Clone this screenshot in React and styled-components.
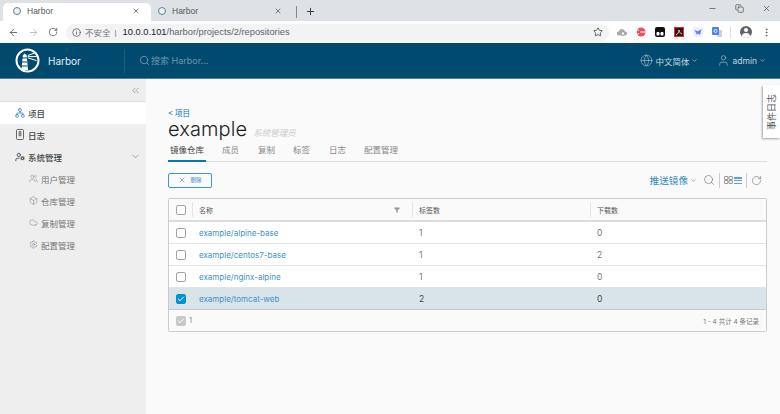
import React from "react";
import styled, { createGlobalStyle } from "styled-components";
import {
  ArrowLeft, ArrowRight, RotateCw, Info, Star, Minus, X, Plus, Search, Globe, User, ChevronDown,
  ChevronsLeft, Network, UserCog, Users, Box, Cloud, Settings, MoreVertical, Filter, Check, Copy,
} from "lucide-react";

const Global = createGlobalStyle`
  html, body { margin: 0; padding: 0; background: #fafafa; }
  body { font-family: Inter, "Noto Sans CJK SC", sans-serif; }
  * { box-sizing: border-box; }
`;

const Page = styled.div`
  width: 780px; height: 414px; overflow: hidden; position: relative;
  display: flex; flex-direction: column;
`;
const TabStrip = styled.div`
  height: 21px; background: #dee1e6; display: flex; align-items: flex-end; padding-left: 3px; color: #5f6368;
`;
const Tab = styled.div`
  width: ${p => p.$w}px; height: 18px; display: flex; align-items: center; padding: 0 0 2px ${p => p.$pad}px;
  background: ${p => (p.$active ? "#fff" : "transparent")}; border-radius: 5px 5px 0 0;
  font: 8.5px "Liberation Sans", sans-serif; color: #55585c;
`;
const Favicon = styled.span`
  width: 8px; height: 8px; border-radius: 50%; border: 1.5px solid #5a8a80; background: #eef; margin-right: 6px; flex: none;
`;
const TabLabel = styled.span`flex: 1;`;
const TabClose = styled.span`display: flex; width: 19px; color: #444;`;
const TabSep = styled.span`width: 1px; height: 12px; background: #80868b; margin: 0 8px 3px 3px;`;
const PlusBox = styled.span`display: flex; margin-bottom: 4px; color: #333;`;
const WinControls = styled.div`
  margin-left: auto; align-self: flex-start; display: flex; gap: 18px; padding: 4px 9px 0 0; color: #555;
`;
const BrowserBar = styled.div`
  height: 22px; background: #fff; display: flex; align-items: center; padding: 0 6px 0 8px; color: #5f6368;
`;
const NavIcons = styled.div`display: flex; gap: 9px; margin-right: 8px;`;
const Omnibox = styled.div`
  width: 543px; height: 17px; border-radius: 9px; background: #f1f3f4; display: flex; align-items: center; padding: 0 6px;
  font: 9.3px "Liberation Sans", "Noto Sans CJK SC", sans-serif; color: #202124;
`;
const NotSafe = styled.span`color: #777; margin-left: 4px; font-size: 8.5px;`;
const Divider = styled.span`color: #777; margin: 0 6px 0 4px; font-size: 8px;`;
const UrlPath = styled.span`color: #5f6368;`;
const StarBox = styled.span`margin-left: auto; display: flex; color: #444;`;
const Extensions = styled.div`display: flex; align-items: center; margin-left: 8px; gap: 9px;`;
const ExtSep = styled.span`width: 1px; height: 11px; background: #ddd; margin: 0 0 0 -1px;`;
const Avatar = styled.span`
  width: 12px; height: 12px; border-radius: 50%; background: #5f6368; position: relative; overflow: hidden; flex: none;
  &::before { content: ""; position: absolute; left: 4px; top: 2px; width: 4px; height: 4px; border-radius: 50%; background: #fff; }
  &::after { content: ""; position: absolute; left: 2px; top: 7px; width: 8px; height: 6px; border-radius: 50%; background: #fff; }
`;

const Header = styled.header`
  height: 36px; background: #004a70; border-bottom: 1px solid #4d7f9a; display: flex; align-items: center; color: #fff; flex: none;
`;
const Brand = styled.div`
  width: 125px; height: 24px; display: flex; align-items: center; padding-left: 15px; gap: 8px;
  border-right: 1px solid #1a5f82; font-size: 10px; color: #e6eef2;
`;
const SearchBox = styled.div`
  display: flex; align-items: center; margin-left: 14px; gap: 1px; font-size: 9px; color: #6d97ad;
`;
const HeaderRight = styled.div`display: flex; align-items: center; margin-left: auto; padding-right: 14px; color: #c3d6df; font-size: 8.5px;`;
const HeaderItem = styled.div`
  display: flex; align-items: center; gap: 2px; margin-left: ${p => p.$ml || 0}px;
`;

const Body = styled.div`flex: 1; display: flex; min-height: 0;`;
const Sidebar = styled.nav`width: 146px; background: #eee; flex: none; display: flex; flex-direction: column;`;
const Collapse = styled.div`
  height: 23px; border-bottom: 1px solid #dcdcdc; display: flex; justify-content: flex-end; align-items: center; padding-right: 5px; color: #555; flex: none;
`;
const NavRow = styled.div`
  height: 22px; display: flex; align-items: center; flex: none;
  padding: 0 0 1px ${p => (p.$sub ? 29 : 15)}px; gap: 3px;
  background: ${p => (p.$active ? "#fff" : "transparent")};
  color: ${p => (p.$sub ? "#777" : "#444")}; font-size: 8.5px; font-weight: ${p => (p.$sub ? 400 : 500)};
`;
const NavChevron = styled.span`margin-left: auto; display: flex; margin-right: 5px; color: #666;`;

const Main = styled.main`flex: 1; padding: 30px 13px 0 22px; min-width: 0;`;
const Crumb = styled.div`font-size: 7.5px; color: #0079b8; line-height: 10px; height: 10px;`;
const TitleRow = styled.div`display: flex; align-items: baseline; gap: 6px; height: 20px;`;
const Title = styled.h1`margin: 0; font-size: 20px; font-weight: 300; color: #222; line-height: 20px; letter-spacing: 0.1px;`;
const Role = styled.span`font-size: 8.5px; font-style: italic; color: #ccc;`;
const Tabs = styled.div`display: flex; height: 23px; border-bottom: 1px solid #ddd;`;
const ProjectTab = styled.div`
  font-size: 8.5px; color: ${p => (p.$active ? "#444" : "#888")}; padding: 0 2px; height: 23px; line-height: 23px;
  margin-right: ${p => p.$mr}px; white-space: nowrap;
  border-bottom: 2px solid ${p => (p.$active ? "#0079b8" : "transparent")};
  width: ${p => p.$w}px;
`;
const Actions = styled.div`display: flex; align-items: center; height: 16px; margin-top: 10px;`;
const DeleteBtn = styled.button`
  width: 44px; height: 15px; padding: 0; border: 1px solid #3a9ad0; border-radius: 2px; background: transparent; color: #3a8fc0;
  font: 5.5px Inter, "Noto Sans CJK SC", sans-serif; display: flex; align-items: center; justify-content: center; gap: 4px;
`;
const Tools = styled.div`margin-left: auto; display: flex; align-items: center; color: #666; padding-right: 5px;`;
const Push = styled.span`font-size: 9.5px; color: #2f8ac0; display: flex; align-items: center; gap: 2px; margin-right: 6px; letter-spacing: 0.1px;`;
const ToolSep = styled.span`width: 1px; height: 15px; background: #ccc; margin: 0 4px;`;
const ViewToggle = styled.span`display: flex; align-items: center; gap: 1px;`;
const ListGlyph = styled.span`
  width: 8px; height: 7px; display: block;
  background: repeating-linear-gradient(#5ba3cf 0 1.5px, transparent 1.5px 2.75px);
`;

const TableCard = styled.div`
  margin-top: 10px; border: 1px solid #ccc; border-radius: 2px; background: #fff; overflow: hidden;
`;
const RowGrid = styled.div`
  display: grid; grid-template-columns: 23px 220px 178px 1fr; align-items: center;
  height: ${p => (p.$head ? 23 : 22)}px;
  background: ${p => (p.$head ? "#fafafa" : p.$selected ? "#d9e4ea" : "#fff")};
  border-bottom: ${p => (p.$head ? "2px solid #ddd" : p.$selected ? "1px solid #c8c8c8" : "1px solid #e4e4e4")};
  font-size: 8.5px; color: #666;
`;
const BoxCell = styled.div`display: flex; padding-left: 7px;`;
const CheckBox = styled.span`
  width: 10px; height: 10px; border-radius: 2px; display: flex; align-items: center; justify-content: center; color: #fff;
  border: 1px solid ${p => (p.$on ? "#0094d2" : p.$muted ? "#c8c8c8" : "#a3a3a3")};
  background: ${p => (p.$on ? "#0094d2" : p.$muted ? "#c8c8c8" : "#fff")};
`;
const NameCell = styled.div`color: #4492c2; padding-left: 7px; font-size: 8px;`;
const HeadCell = styled.div`
  height: 15px; display: flex; align-items: center; padding-left: 6px; border-left: 1px solid #e4e4e4; font-size: 7px; color: #555;
  justify-content: space-between; padding-right: 12px;
`;
const ValueCell = styled.div`padding-left: 7px; color: ${p => (p.$selected ? "#444" : "#777")};`;
const FilterWrap = styled.span`display: flex; color: #999;`;
const Foot = styled.div`
  height: 21px; background: #fafafa; display: flex; align-items: center; padding: 0 7px; font-size: 7.5px; color: #888; gap: 3px;
`;
const Count = styled.span`margin-left: auto; font-size: 6.5px; color: #777;`;
const EventTab = styled.div`
  position: absolute; right: 0; top: 85px; width: 17px; height: 53px; background: #fff; color: #555;
  box-shadow: 1px -1px 2px rgba(0,0,0,.35); writing-mode: vertical-rl; text-orientation: sideways;
  transform: rotate(180deg); font-size: 9px;
  display: flex; align-items: center; justify-content: center;
`;
const Ext = styled.svg`flex: none; display: block;`;

const HarborLogo = () => (
  <Ext width="25" height="25" viewBox="0 0 25 25">
    <circle cx="12.5" cy="12.5" r="11" fill="none" stroke="#fff" strokeWidth="2" />
    <path d="M7.5 10.5h4.5l1 11.5H6.5z" fill="#fff" />
    <path d="M7.8 9.5V7.2L9.8 5.5l2 1.7v2.3z" fill="#fff" />
    <path d="M12.8 7.5l8.4-3M12.8 8.6h9.7M12.8 9.8l8.8 2.8" stroke="#fff" strokeWidth="1" />
    <path d="M7 14h5.5M6.7 18h6" stroke="#004a70" strokeWidth="1" />
  </Ext>
);
const BookGlyph = () => (
  <Ext width="10" height="11" viewBox="0 0 10 11" fill="none" stroke="#666" strokeWidth="1">
    <rect x="1.5" y="0.5" width="7" height="10" rx="1" />
    <path d="M4 2.5h2v4.5H4z" fill="#999" strokeWidth="0.6" />
  </Ext>
);
const GridGlyph = () => (
  <Ext width="9" height="8" viewBox="0 0 9 8" fill="none" stroke="#777" strokeWidth="0.8">
    <rect x="0.5" y="0.5" width="3.4" height="3" rx="0.6" />
    <rect x="5" y="0.5" width="3.4" height="3" rx="0.6" />
    <rect x="0.5" y="4.5" width="3.4" height="3" rx="0.6" />
    <rect x="5" y="4.5" width="3.4" height="3" rx="0.6" />
  </Ext>
);

const rows = [
  ["example/alpine-base", "1", "0"],
  ["example/centos7-base", "1", "2"],
  ["example/nginx-alpine", "1", "0"],
  ["example/tomcat-web", "2", "0"],
];
const subs = [["用户管理", Users], ["仓库管理", Box], ["复制管理", Cloud], ["配置管理", Settings]];
const tabs = [["镜像仓库", 38, 14, true], ["成员", 21, 15], ["复制", 21, 14], ["标签", 21, 15], ["日志", 21, 14], ["配置管理", 40, 0]];

export default function App() {
  return (
    <Page>
      <Global />
      <TabStrip>
        <Tab $active $w={148} $pad={10}><Favicon /><TabLabel>Harbor</TabLabel><TabClose><X size={8} /></TabClose></Tab>
        <Tab $w={142} $pad={7}><Favicon /><TabLabel>Harbor</TabLabel><TabClose><X size={8} /></TabClose></Tab>
        <TabSep />
        <PlusBox><Plus size={11} /></PlusBox>
        <WinControls><Minus size={9} /><Copy size={9} /><X size={9} /></WinControls>
      </TabStrip>
      <BrowserBar>
        <NavIcons>
          <ArrowLeft size={11} /><ArrowRight size={11} color="#bbb" /><RotateCw size={10} />
        </NavIcons>
        <Omnibox>
          <Info size={9} color="#555" />
          <NotSafe>不安全</NotSafe><Divider>|</Divider>
          10.0.0.101<UrlPath>/harbor/projects/2/repositories</UrlPath>
          <StarBox><Star size={10} /></StarBox>
        </Omnibox>
        <Extensions>
          <Ext width="10" height="10" viewBox="0 0 10 10"><path d="M1.5 8.5a2 2 0 0 1 .3-4 3.2 3.2 0 0 1 6.2 0 2 2 0 0 1 .2 4z" fill="#aaa" /><circle cx="6" cy="6.5" r="1.8" fill="#fff" stroke="#999" /></Ext>
          <Ext width="10" height="10" viewBox="0 0 10 10"><circle cx="5" cy="5" r="4.5" fill="#e8505f" /><path d="M3 3.5a2 2 0 1 0 0 3M4 5h5" stroke="#fff" strokeWidth="1" fill="none" /></Ext>
          <Ext width="10" height="10" viewBox="0 0 10 10"><rect width="10" height="10" rx="2" fill="#111" /><rect x="1.5" y="5" width="3" height="3.5" rx="1" fill="#fff" /><rect x="5.5" y="5" width="3" height="3.5" rx="1" fill="#fff" /></Ext>
          <Ext width="10" height="10" viewBox="0 0 10 10"><rect x="0.5" y="0.5" width="9" height="9" fill="#3a1010" stroke="#d33" /><path d="M2 8c2-1 3-3 3-5 0 2 1 3 3 4" stroke="#fff" fill="none" strokeWidth="0.8" /></Ext>
          <Ext width="10" height="10" viewBox="0 0 10 10"><rect width="10" height="10" rx="2" fill="#eef0ff" /><path d="M1.5 3l3.5 1.2 3.5-2-1.5 5.8-2-1.5-1 1.5z" fill="#6a80f0" /></Ext>
          <Ext width="10" height="10" viewBox="0 0 10 10"><rect x="5" y="3" width="5" height="7" fill="#c9d0da" /><rect width="7" height="8" rx="1" fill="#4a86e8" /><circle cx="3.5" cy="4" r="1.5" fill="none" stroke="#fff" strokeWidth="0.8" /></Ext>
          <ExtSep />
          <Avatar />
          <MoreVertical size={11} />
        </Extensions>
      </BrowserBar>
      <Header>
        <Brand><HarborLogo />Harbor</Brand>
        <SearchBox><Search size={11} />搜索 Harbor...</SearchBox>
        <HeaderRight>
          <HeaderItem><Globe size={13} strokeWidth={1} />中文简体<ChevronDown size={7} /></HeaderItem>
          <HeaderItem $ml={19}><User size={13} strokeWidth={1} />admin<ChevronDown size={7} /></HeaderItem>
        </HeaderRight>
      </Header>
      <Body>
        <Sidebar>
          <Collapse><ChevronsLeft size={11} strokeWidth={1} /></Collapse>
          <NavRow $active><Network size={10} color="#3b8cbc" />项目</NavRow>
          <NavRow><BookGlyph />日志</NavRow>
          <NavRow><UserCog size={10} />系统管理<NavChevron><ChevronDown size={11} strokeWidth={1.2} /></NavChevron></NavRow>
          {subs.map(([label, Icon]) => (
            <NavRow $sub key={label}><Icon size={9} strokeWidth={1.2} />{label}</NavRow>
          ))}
        </Sidebar>
        <Main>
          <Crumb>&lt; 项目</Crumb>
          <TitleRow><Title>example</Title><Role>系统管理员</Role></TitleRow>
          <Tabs>
            {tabs.map(([label, w, mr, active]) => (
              <ProjectTab key={label} $w={w} $mr={mr} $active={active}>{label}</ProjectTab>
            ))}
          </Tabs>
          <Actions>
            <DeleteBtn><X size={8} />删除</DeleteBtn>
            <Tools>
              <Push>推送镜像<ChevronDown size={7} /></Push>
              <Search size={12} strokeWidth={1.2} />
              <ToolSep />
              <ViewToggle><GridGlyph /><ListGlyph /></ViewToggle>
              <ToolSep />
              <RotateCw size={11} strokeWidth={1.2} />
            </Tools>
          </Actions>
          <TableCard>
            <RowGrid $head>
              <BoxCell><CheckBox /></BoxCell>
              <HeadCell>名称<FilterWrap><Filter size={6} fill="#999" /></FilterWrap></HeadCell>
              <HeadCell>标签数</HeadCell>
              <HeadCell>下载数</HeadCell>
            </RowGrid>
            {rows.map(([name, a, b], i) => (
              <RowGrid key={name} $selected={i === 3}>
                <BoxCell><CheckBox $on={i === 3}>{i === 3 && <Check size={8} strokeWidth={3} />}</CheckBox></BoxCell>
                <NameCell>{name}</NameCell>
                <ValueCell $selected={i === 3}>{a}</ValueCell>
                <ValueCell $selected={i === 3}>{b}</ValueCell>
              </RowGrid>
            ))}
            <Foot>
              <CheckBox $muted><Check size={8} strokeWidth={3} /></CheckBox>1
              <Count>1 - 4 共计 4 条记录</Count>
            </Foot>
          </TableCard>
        </Main>
      </Body>
      <EventTab>事件日志</EventTab>
    </Page>
  );
}
